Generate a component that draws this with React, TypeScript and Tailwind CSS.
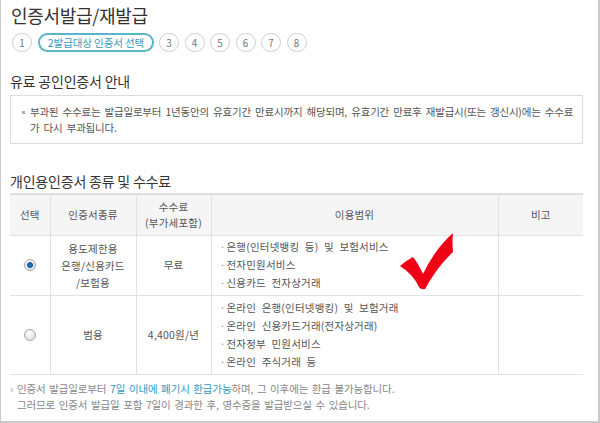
import type { ReactNode } from 'react';

const FONT = "font-['Noto_Sans_CJK_KR','Liberation_Sans',sans-serif]";

const STEPS = [3, 4, 5, 6, 7, 8];

function StepDot({ children }: { children: ReactNode }) {
  return (
    <span className="w-[20px] h-[19px] rounded-full border border-[#cfcfcf] flex items-center justify-center text-[10px] text-[#777] shrink-0">
      {children}
    </span>
  );
}

function Radio({ checked }: { checked?: boolean }) {
  return (
    <span className="mx-auto w-[12px] h-[12px] rounded-full border border-[#a9a9a9] bg-[radial-gradient(circle_at_40%_35%,#ffffff,#d4d4d4)] flex items-center justify-center">
      {checked && <span className="w-[6px] h-[6px] rounded-full bg-[#1f6fb5] border border-[#0d4f8a]" />}
    </span>
  );
}

function Uses({ items }: { items: string[] }) {
  return (
    <ul className="pl-[8px]">
      {items.map((t) => (
        <li key={t} className="flex leading-[18px]">
          <span className="w-[7px] text-[#999]">·</span>
          <span>{t}</span>
        </li>
      ))}
    </ul>
  );
}

export default function App() {
  return (
    <div
      className={`${FONT} relative w-[600px] h-[423px] bg-white border-l border-r-2 border-b-2 border-[#c9c9c9] pl-[9px] pr-[15px] text-[#555]`}
    >
      <h1 className="pt-[4px] pl-[1px] text-[18px] leading-[22px] text-[#333] tracking-[-0.3px]">
        인증서발급/재발급
      </h1>

      {/* step indicator — step 2 is the current one */}
      <div className="mt-[7px] pl-[2px] flex items-center gap-[6px]">
        <StepDot>1</StepDot>
        <span className="h-[19px] w-[116px] rounded-full border-2 border-[#5ab4cc] flex items-center justify-center text-[10.5px] text-[#2f9ac0] tracking-[-0.1px] shrink-0">
          2발급대상 인증서 선택
        </span>
        <div className="ml-[-1px] flex gap-[5.5px]">
          {STEPS.map((n) => (
            <StepDot key={n}>{n}</StepDot>
          ))}
        </div>
      </div>

      <h2 className="mt-[20px] text-[14px] leading-[18px] text-[#333] tracking-[-0.2px]">유료 공인인증서 안내</h2>

      <div className="mt-[5px] border border-[#dcdcdc] pt-[8px] pb-[7px] pl-[11px] pr-[8px] text-[10.5px] leading-[16px] tracking-[-0.2px] [word-spacing:2px] text-[#555]">
        <div className="flex">
          <span className="mt-[7px] w-[3px] h-[3px] bg-[#b0b0b0] shrink-0" />
          <p className="pl-[5px]">
            부과된 수수료는 발급일로부터 1년동안의 유효기간 만료시까지 해당되며, 유효기간 만료후 재발급시(또는 갱신시)에는 수수료가 다시 부과됩니다.
          </p>
        </div>
      </div>

      <h2 className="mt-[28px] text-[14px] leading-[18px] text-[#333] tracking-[-0.2px]">개인용인증서 종류 및 수수료</h2>

      <table className="mt-[3px] w-full border-collapse text-[10.5px] tracking-[0.2px] [word-spacing:3px] text-[#555]">
        <colgroup>
          <col className="w-[40px]" />
          <col className="w-[86px]" />
          <col className="w-[75px]" />
          <col className="w-[287px]" />
          <col />
        </colgroup>
        <thead>
          <tr className="bg-[#f5f5f5] border-t-2 border-[#dedede] border-b border-b-[#e2e2e2] h-[41px] leading-[16px]">
            <th className="font-normal">선택</th>
            <th className="font-normal border-l border-[#e2e2e2]">인증서종류</th>
            <th className="font-normal border-l border-[#e2e2e2]">
              수수료
              <br />
              (부가세포함)
            </th>
            <th className="font-normal border-l border-[#e2e2e2]">이용범위</th>
            <th className="font-normal border-l border-[#e2e2e2]">비고</th>
          </tr>
        </thead>
        <tbody>
          <tr className="border-b border-[#e2e2e2] h-[60px]">
            <td>
              <Radio checked />
            </td>
            <td className="border-l border-[#e2e2e2] text-center leading-[17px]">
              용도제한용
              <br />
              은행/신용카드
              <br />
              /보험용
            </td>
            <td className="border-l border-[#e2e2e2] text-center">무료</td>
            <td className="border-l border-[#e2e2e2]">
              <Uses items={['은행(인터넷뱅킹 등) 및 보험서비스', '전자민원서비스', '신용카드 전자상거래']} />
            </td>
            <td className="border-l border-[#e2e2e2]" />
          </tr>
          <tr className="border-b border-[#e2e2e2] h-[79px]">
            <td>
              <Radio />
            </td>
            <td className="border-l border-[#e2e2e2] text-center">범용</td>
            <td className="border-l border-[#e2e2e2] text-center">4,400원/년</td>
            <td className="border-l border-[#e2e2e2]">
              <Uses
                items={[
                  '온라인 은행(인터넷뱅킹) 및 보험거래',
                  '온라인 신용카드거래(전자상거래)',
                  '전자정부 민원서비스',
                  '온라인 주식거래 등',
                ]}
              />
            </td>
            <td className="border-l border-[#e2e2e2]" />
          </tr>
        </tbody>
      </table>

      <div className="mt-[6px] text-[10.5px] leading-[16px] tracking-[-0.15px] [word-spacing:1.5px] text-[#888]">
        <p className="flex">
          <span className="w-[7px] text-[#999]">›</span>
          <span>
            인증서 발급일로부터 <span className="text-[#2f9ac0]">7일 이내에 폐기시 환급가능</span>하며, 그 이후에는 환급 불가능합니다.
          </span>
        </p>
        <p className="pl-[7px]">그러므로 인증서 발급일 포함 7일이 경과한 후, 영수증을 발급받으실 수 있습니다.</p>
      </div>

      {/* hand-drawn red check mark over the first row */}
      <svg className="absolute left-[396px] top-[230px] w-[60px] h-[64px]" viewBox="0 0 60 64">
        <path
          d="M3 36 Q10 30 16 27 Q21 33 26 44 Q38 19 56 3 Q55 13 56 22 Q40 37 28 59 Q24 60 22 57 Q16 44 3 36 Z"
          fill="#f00014"
        />
      </svg>
    </div>
  );
}
